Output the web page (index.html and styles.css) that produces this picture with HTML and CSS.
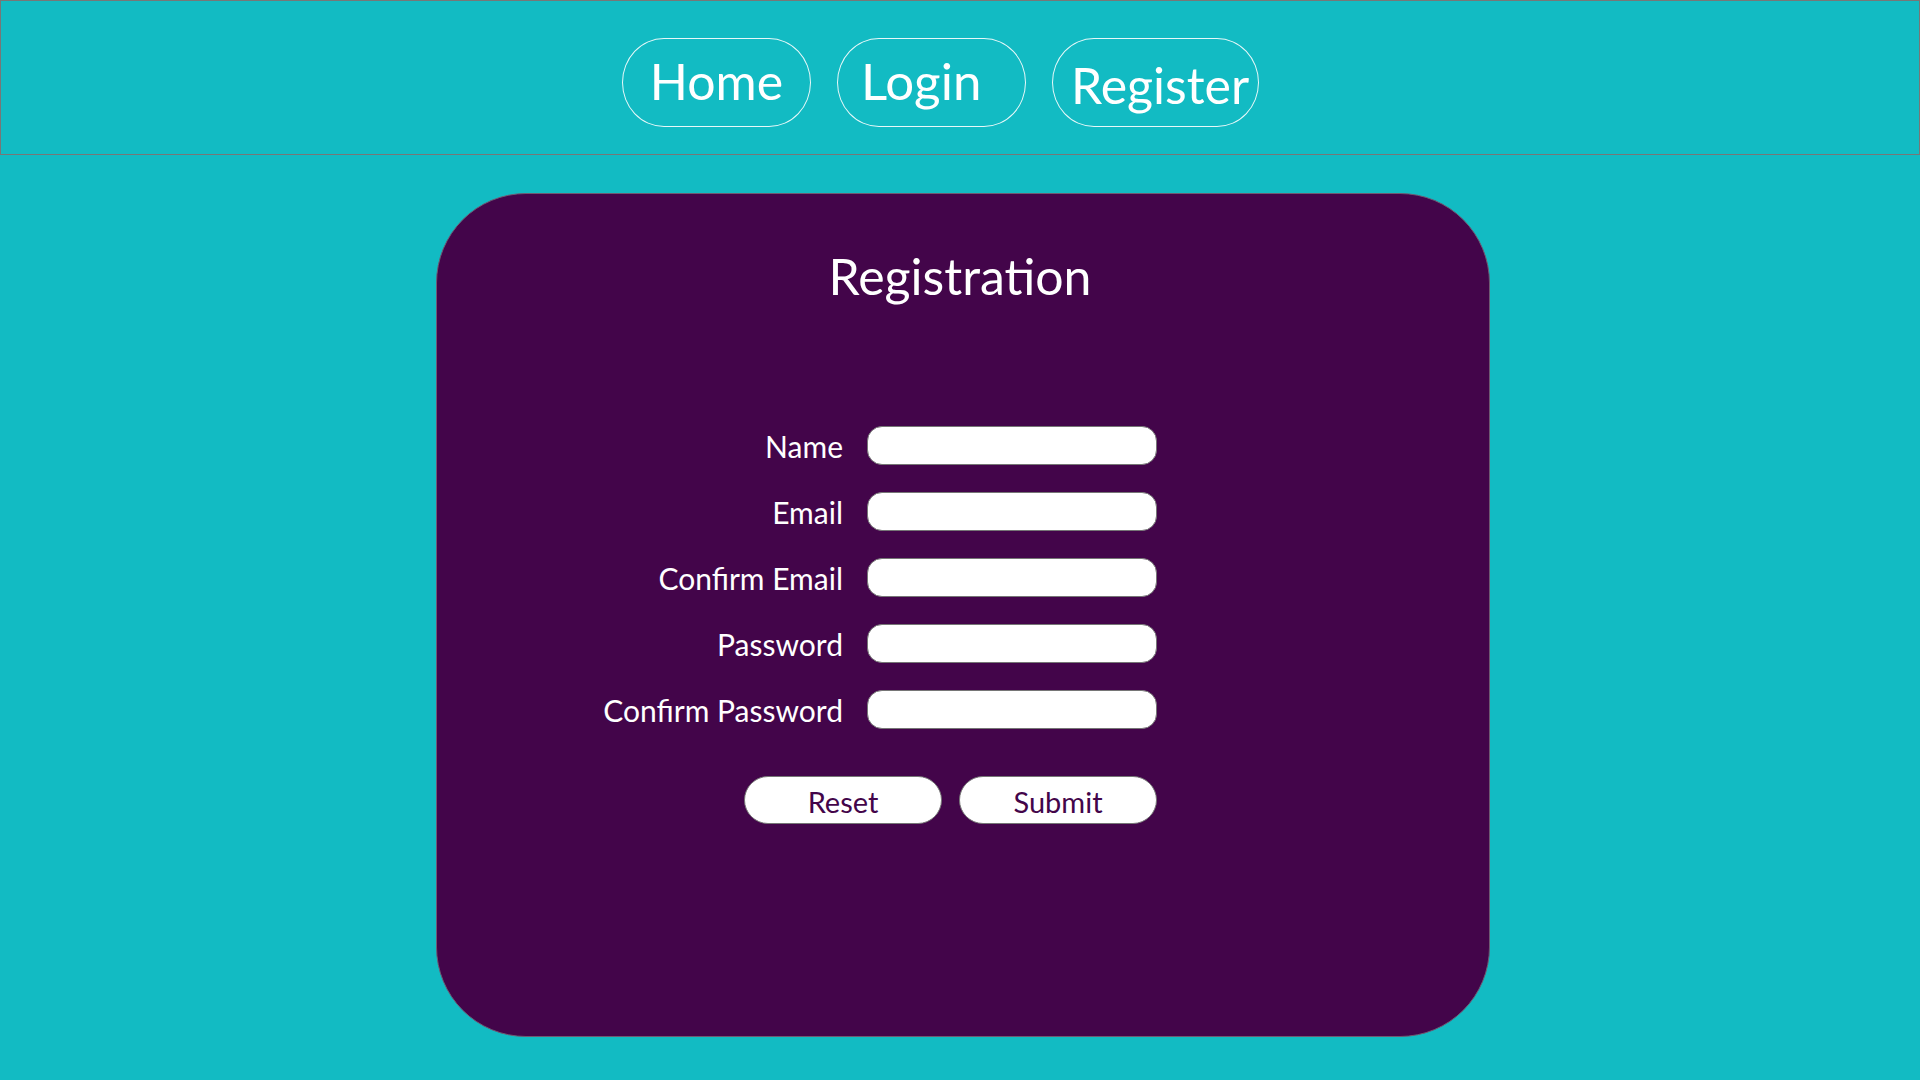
FILE: index.html
```html
<!DOCTYPE html>
<html lang="en">
<head>
<meta charset="utf-8">
<title>Registration</title>
<link rel="stylesheet" href="styles.css">
</head>
<body>
<header class="site-header">
  <nav class="nav">
    <a class="nav-link nav-home" href="#">Home</a>
    <a class="nav-link nav-login" href="#">Login</a>
    <a class="nav-link nav-register" href="#">Register</a>
  </nav>
</header>
<main class="card">
  <h1 class="card-title">Registration</h1>
  <form class="reg-form">
    <label class="field-label" for="name">Name</label>
    <input class="field-input" id="name" type="text">
    <label class="field-label" for="email">Email</label>
    <input class="field-input" id="email" type="email">
    <label class="field-label" for="cemail">Confirm Email</label>
    <input class="field-input" id="cemail" type="email">
    <label class="field-label" for="pw">Password</label>
    <input class="field-input" id="pw" type="password">
    <label class="field-label" for="cpw">Confirm Password</label>
    <input class="field-input" id="cpw" type="password">
    <div class="actions">
      <button class="btn" type="reset">Reset</button>
      <button class="btn" type="submit">Submit</button>
    </div>
  </form>
</main>
</body>
</html>
```
FILE: styles.css
```css
html, body {
  margin: 0;
  padding: 0;
}
body {
  background: #12bbc3;
  font-family: Lato, "Open Sans", sans-serif;
  min-height: 1080px;
}
.site-header {
  box-sizing: border-box;
  height: 155px;
  border: 1px solid #777777;
  padding-top: 37px;
  padding-right: 39px;
  display: flex;
  justify-content: center;
  align-items: flex-start;
}
.nav {
  display: flex;
  gap: 26px;
}
.nav-link {
  box-sizing: border-box;
  height: 89px;
  display: flex;
  align-items: center;
  border: 1px solid rgba(255, 255, 255, 0.9);
  border-radius: 42px / 44.5px;
  color: #ffffff;
  text-decoration: none;
  font-size: 50px;
  line-height: 1;
  padding-bottom: 4px;
  white-space: nowrap;
}
.nav-home {
  width: 189px;
  justify-content: center;
}
.nav-login {
  width: 189px;
  padding-left: 23px;
  font-size: 51px;
}
.nav-register {
  width: 207px;
  padding-left: 18px;
  padding-bottom: 0;
  padding-top: 4px;
}
.card {
  box-sizing: border-box;
  width: 1054px;
  height: 844px;
  margin: 38px 0 0 436px;
  background: #43054a;
  border: 1px solid #6e5a72;
  border-radius: 90px;
  padding-top: 52px;
}
.card-title {
  margin: 0;
  padding-right: 6px;
  font-size: 50px;
  font-weight: 400;
  line-height: 60px;
  text-align: center;
  color: #ffffff;
}
.reg-form {
  margin: 120px 0 0 156px;
  display: grid;
  grid-template-columns: 250px 290px;
  column-gap: 24px;
  row-gap: 27px;
}
.field-label {
  box-sizing: border-box;
  height: 39px;
  color: #ffffff;
  font-size: 30px;
  line-height: 37px;
  padding-top: 2px;
  text-align: right;
  align-self: center;
  white-space: nowrap;
}
.field-input {
  box-sizing: border-box;
  width: 290px;
  height: 39px;
  margin: 0;
  border: 1px solid #767676;
  border-radius: 15px;
  background: #ffffff;
  padding: 0 12px;
  font-family: inherit;
  font-size: 20px;
}
.actions {
  grid-column: 1 / -1;
  display: flex;
  justify-content: flex-end;
  gap: 17px;
  margin-top: 20px;
}
.btn {
  box-sizing: border-box;
  width: 198px;
  height: 48px;
  margin: 0;
  padding: 3px 0 0;
  border: 1px solid #767676;
  border-radius: 24px;
  background: #ffffff;
  color: #43054a;
  font-family: inherit;
  font-size: 29px;
  line-height: 1;
}
```
